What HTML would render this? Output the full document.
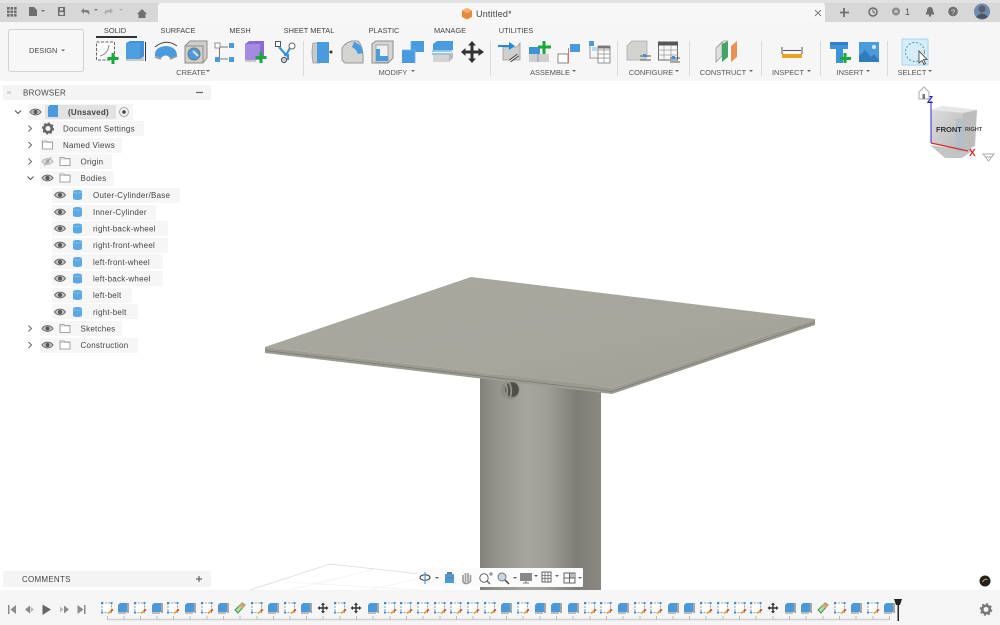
<!DOCTYPE html>
<html>
<head>
<meta charset="utf-8">
<style>
html,body{margin:0;padding:0;width:1000px;height:625px;overflow:hidden;background:#fff;font-family:"Liberation Sans",sans-serif;}
svg{position:absolute;left:0;top:0;}
text{font-family:"Liberation Sans",sans-serif;fill:#4a4a4a;}
.tb{font-size:7.4px;fill:#444;text-anchor:middle;}
.lb{font-size:7.4px;fill:#555;text-anchor:middle;}
.tr{font-size:8px;fill:#444;letter-spacing:.25px;}
</style>
</head>
<body>
<svg width="1000" height="625" viewBox="0 0 1000 625" xmlns="http://www.w3.org/2000/svg">
<defs>
<linearGradient id="cyl" x1="0" x2="1" y1="0" y2="0">
<stop offset="0" stop-color="#82817a"/><stop offset=".12" stop-color="#93928a"/><stop offset=".38" stop-color="#a6a59d"/><stop offset=".55" stop-color="#a09f97"/><stop offset=".8" stop-color="#7f7e76"/><stop offset="1" stop-color="#8a8981"/>
</linearGradient>
<linearGradient id="plate" x1="0" x2="1" y1="0" y2="1">
<stop offset="0" stop-color="#a8a89f"/><stop offset=".6" stop-color="#a6a69d"/><stop offset="1" stop-color="#9f9f96"/>
</linearGradient>
<linearGradient id="cube" x1="0" x2="1" y1="0" y2="1">
<stop offset="0" stop-color="#dcdcdc"/><stop offset="1" stop-color="#b8b8b8"/>
</linearGradient>
<g id="sk"><rect x="-5" y="-5" width="9.5" height="9.5" fill="#fff" stroke="#7c8a98" stroke-width=".8" stroke-dasharray="2 1"/><rect x="-6" y="-6" width="2" height="2" fill="#3d8dd2"/><rect x="3.5" y="-6" width="2" height="2" fill="#3d8dd2"/><rect x="-6" y="3.5" width="2" height="2" fill="#3d8dd2"/><path d="M1 5.5L5 2" stroke="#f0a030" stroke-width="1.8"/><path d="M4 3L6 1.5" stroke="#d04040" stroke-width="1.6"/></g>
<g id="bd"><path d="M-5-3L-3-5H4V4H-5Z" fill="#4c9ad9"/><path d="M-5-3H2V4H-5Z" fill="#4a98da"/><path d="M-5 4H3V6H-5Z" fill="#bdbdb8"/><path d="M5-5V5" stroke="#444" stroke-width=".9"/></g>
<g id="mv" fill="#333"><path d="M0-5.5L2-3H.7V-.7H3V-2L5.5 0 3 2V.7H.7V3H2L0 5.5-2 3H-.7V.7H-3V2L-5.5 0-3-2V-.7H-.7V-3H-2Z"/></g>
<g id="fl"><path d="M-5 2L2-5 5-3-2 5Z" fill="#b9d7b0" stroke="#3f9a4a" stroke-width="1"/><path d="M1-5L5-3 3 0 -1-2Z" fill="#e0a070"/></g>
<g id="eye"><path d="M-5.5 0C-3-3.8 3-3.8 5.5 0 3 3.800-3 3.800-5.500 0Z" fill="#c4c4c4" stroke="#666" stroke-width="1"/><circle r="2" fill="#555"/></g>
<g id="fld"><path d="M-5-4H-1L0-3H5V4H-5Z" fill="#fff" stroke="#888" stroke-width=".8"/><path d="M-5-2.5H5" stroke="#aaa" stroke-width=".6"/></g>
<g id="cy"><path d="M-4.500-3.500C-4.500-5.500 4.500-5.500 4.500-3.500V3.500C4.500 5.500-4.500 5.500-4.500 3.500Z" fill="#5aa9e6"/><path d="M-4.500-3C-3-1.500 3-1.500 4.500-3" stroke="#8cc7f0" fill="none" stroke-width=".7"/></g>
<path id="car" d="M0 0H4L2 2Z" fill="#666"/>
<path id="gt" d="M-2-3L1 0-2 3" fill="none" stroke="#666" stroke-width="1"/>
<path id="gd" d="M-3-1.500L0 1.500 3-1.500" fill="none" stroke="#555" stroke-width="1"/>
</defs>

<!-- top bar -->
<rect width="1000" height="3" fill="#e2e2e2"/>
<rect y="3" width="1000" height="19" fill="#d7d7d7"/>
<path d="M158 22V6Q158 3 161 3H822Q825 3 825 6V22Z" fill="#f7f7f7"/>
<rect y="22" width="1000" height="59" fill="#f6f6f6"/>
<!-- top bar icons left -->
<g fill="#6f6f6f">
<rect x="7" y="7" width="2.600" height="2.600"/><rect x="10.500" y="7" width="2.600" height="2.600"/><rect x="14" y="7" width="2.600" height="2.600"/>
<rect x="7" y="10.500" width="2.600" height="2.600"/><rect x="10.500" y="10.500" width="2.600" height="2.600"/><rect x="14" y="10.500" width="2.600" height="2.600"/>
<rect x="7" y="14" width="2.600" height="2.600"/><rect x="10.500" y="14" width="2.600" height="2.600"/><rect x="14" y="14" width="2.600" height="2.600"/>
<path d="M29 7H34L37 10V16H29Z"/>
<path d="M41 10H45L43 12Z"/>
<path d="M58 7H65V16H58Z"/>
</g>
<rect x="60" y="8" width="3" height="2.500" fill="#d7d7d7"/><rect x="59.500" y="12" width="4" height="3" fill="#d7d7d7"/>
<path d="M81 11L84 8V10H88Q90 11 89 15Q88 12 84 12V14Z" fill="#7d7d7d"/><path d="M94 9H98L96 11Z" fill="#7d7d7d"/>
<path d="M113 11L110 8V10H106Q104 11 105 15Q106 12 110 12V14Z" fill="#aeaeae"/><path d="M119 9H123L121 11Z" fill="#aeaeae"/>
<path d="M137 14L142 9 147 14H145.500V18H138.500V14Z" fill="#707070"/>
<!-- title -->
<path d="M467 8L472 10.500V17L467 19.500 462 17V10.500Z" fill="#e8893a"/><path d="M462 10.500L467 8 472 10.500 467 13Z" fill="#f4b070"/>
<text x="476" y="17" font-size="9" letter-spacing=".2" style="fill:#444">Untitled*</text>
<path d="M815 10L821 16M821 10L815 16" stroke="#777" stroke-width=".9"/>
<!-- right top icons -->
<path d="M844 8V17M840 12.500H849" stroke="#6f6f6f" stroke-width="1.800"/>
<circle cx="873" cy="12" r="4" fill="#d7d7d7" stroke="#6a6a6a" stroke-width="1.500"/><path d="M873 9.500V12L875 13" stroke="#666" fill="none"/>
<circle cx="896" cy="11.500" r="4" fill="#8a8a8a"/><circle cx="896" cy="11.500" r="1.800" fill="#c0c0c0"/>
<text x="905" y="15" font-size="9" style="fill:#555">1</text>
<path d="M930 7Q933 7 933 11L934.500 14.500H925.500L927 11Q927 7 930 7Z" fill="#6f6f6f"/><circle cx="930" cy="15.500" r="1.200" fill="#6f6f6f"/>
<circle cx="953" cy="11.500" r="4.800" fill="#707070"/><text x="951" y="14.500" font-size="7.500" style="fill:#e8e8e8">?</text>
<circle cx="982" cy="11.500" r="8" fill="#6e8cb0"/><circle cx="982" cy="9" r="3.500" fill="#5a5f6a"/><path d="M976 17Q982 10 988 17Q982 21 976 17Z" fill="#4c5566"/>

<!-- Design button -->
<rect x="8.500" y="29.500" width="75" height="42" rx="2" fill="#f7f7f7" stroke="#d2d2d2"/>
<text x="29" y="53" font-size="7.400" style="fill:#444">DESIGN</text><use href="#car" x="61" y="49.500"/>

<!-- tabs -->
<text class="tb" x="115" y="33">SOLID</text>
<rect x="96" y="36" width="41" height="2" fill="#333"/>
<text class="tb" x="178" y="33">SURFACE</text>
<text class="tb" x="240" y="33">MESH</text>
<text class="tb" x="309" y="33">SHEET METAL</text>
<text class="tb" x="384" y="33">PLASTIC</text>
<text class="tb" x="450" y="33">MANAGE</text>
<text class="tb" x="516" y="33">UTILITIES</text>

<!-- separators -->
<g stroke="#dcdcdc"><path d="M303.500 41V76M490.500 41V76M617.500 41V76M689.500 41V76M761.500 41V76M820.500 41V76M887.500 41V76"/></g>

<!-- CREATE icons -->
<rect x="96.500" y="42" width="18" height="18" fill="#fbfbfb" stroke="#666" stroke-dasharray="3 1.500"/><path d="M100 56Q108 54 109 45" stroke="#888" fill="none"/><path d="M113 53V64M107.500 58.500H118.500" stroke="#18a83c" stroke-width="3"/>
<path d="M126 43L130 41H144V59H126Z" fill="#3f92d8"/><path d="M126 43H140V59H126Z" fill="#4e9fe0"/><path d="M126 59H140L144 56V61H126Z" fill="#c8c8c4"/><path d="M145.500 42V61" stroke="#333"/>
<path d="M155 56Q154 47 166 46Q177 47 177 56L170 58Q166 53 161 58Z" fill="#4a9bdd"/><path d="M155 47Q166 38 177 46" fill="none" stroke="#444"/><path d="M155 57L161 59 M170 59L177 56" stroke="#999" stroke-width="1.500"/>
<path d="M185 46L190 41H207V58L203 63H185Z" fill="#cfcfcb" stroke="#8c8c8c"/><path d="M185 46H203V63" fill="none" stroke="#8c8c8c"/><circle cx="194" cy="54" r="6" fill="#4a9bdd" stroke="#777"/><path d="M193 51L198 56" stroke="#ddd" stroke-width="2"/>
<path d="M220 47H228M220 59H228M219.500 48V58" stroke="#7b7b7b"/><rect x="215" y="43" width="5" height="5" fill="#fff" stroke="#777" stroke-width=".8"/><rect x="229" y="43" width="5" height="5" fill="#4a9bdd"/><rect x="215" y="57" width="5" height="5" fill="#4a9bdd"/><rect x="229" y="57" width="5" height="5" fill="#4a9bdd"/>
<path d="M245 44L249 41H264V58H245Z" fill="#8a6bd6"/><path d="M245 44H260V60H245Z" fill="#a48be0"/><path d="M245 60H256V62H245Z" fill="#c8c8c4"/><path d="M261 52V63M255.500 57.500H266.500" stroke="#18a83c" stroke-width="3"/>
<rect x="275.500" y="41.500" width="5" height="5" fill="#fff" stroke="#555"/><circle cx="292" cy="46" r="3" fill="#fff" stroke="#666"/><path d="M279 47L286 55 290 48M284 55H288V60" stroke="#3f92d8" stroke-width="2.200" fill="none"/><circle cx="284" cy="60" r="2.600" fill="#ccc" stroke="#555"/>
<text class="lb" x="191" y="75">CREATE</text><use href="#car" x="206" y="70"/>

<!-- MODIFY -->
<path d="M313 43H320V63H313Q311 53 313 43Z" fill="#c9c9c5" stroke="#999" stroke-width=".8"/><path d="M317 42H329V63H317Z" fill="#4a9bdd"/><circle cx="331" cy="52" r="1.500" fill="#333"/>
<path d="M342 48Q346 42 352 41H358Q364 47 363 63H345L342 60Z" fill="#d4d4d0" stroke="#999"/><path d="M354 42Q362 44 363 53L358 54Q356 49 352 47Z" fill="#4a9bdd"/>
<path d="M372 44L376 41H393V58L388 63H372Z" fill="#d4d4d0" stroke="#8f8f8f"/><path d="M376 45H388V62H376Z" fill="#f0f0ee" stroke="#8f8f8f" stroke-width=".7"/><path d="M376 49H380V56H388V61H376Z" fill="#4a9bdd"/>
<path d="M402 50H411V41H424V52H415V63H402Z" fill="#4a9bdd"/><path d="M411 41V50M402 50H415V63" stroke="#6db2ea" fill="none" stroke-width=".8"/>
<path d="M433 44L437 41H453V50H433Z" fill="#4a9bdd"/><path d="M432 51L452 51M432 54L452 54" stroke="#3f92d8"/><path d="M433 55H449V62H433Z" fill="#d4d4d0"/><path d="M449 55L453 52V58L449 62Z" fill="#bbb"/>
<path d="M472 41L476 45.500H473.500V50.500H478.500V48L484 52 478.500 56V53.500H473.500V58.500H476L472 63 468 58.500H470.500V53.500H465.500V56L461 52 465.500 48V50.500H470.500V45.500H468Z" fill="#333"/>
<text class="lb" x="393" y="75">MODIFY</text><use href="#car" x="411" y="70"/>

<!-- ASSEMBLE -->
<path d="M503 47H517L520 43V60H503Z" fill="#cfcfcb" stroke="#999" stroke-width=".8"/><path d="M498 45H509V42L515 46 509 50V47H498Z" fill="#1f8be0"/><path d="M510 61L518 55" stroke="#333" stroke-width="3"/><path d="M510 61L518 55" stroke="#eee" stroke-width="1.200"/>
<path d="M529 47H540V54H529Z" fill="#3f92d8"/><path d="M529 54H549V62H529Z" fill="#cfcfcb"/><path d="M538 54V62" stroke="#999"/><path d="M544 41V54M538 47H551" stroke="#18a83c" stroke-width="3"/>
<path d="M558 54V63H568V54Z" fill="#fff" stroke="#888"/><path d="M568.500 48V63" stroke="#e07070"/><rect x="570" y="44" width="10" height="8" fill="#4a9bdd"/>
<rect x="589" y="41" width="5" height="5" fill="#4a9bdd"/><rect x="592" y="47" width="5" height="4" fill="#bcd8ef"/><path d="M590 46V58H598" stroke="#999" fill="none"/><rect x="598" y="46" width="12" height="17" fill="#fff" stroke="#777" stroke-width=".8"/><path d="M598 50H610M598 54H610M598 58H610M604 46V63" stroke="#888" stroke-width=".7"/><rect x="598" y="46" width="12" height="2.500" fill="#777"/>
<text class="lb" x="550" y="75">ASSEMBLE</text><use href="#car" x="572" y="70"/>

<!-- CONFIGURE -->
<path d="M627 46L632 41H647V57L644 60H627Z" fill="#d2d2ce" stroke="#aaa" stroke-width=".8"/><path d="M640 56H651M640 60H651" stroke="#555"/><rect x="643" y="54" width="3" height="3" fill="#3f92d8"/>
<rect x="658.500" y="42" width="19" height="18" fill="#f7f7f7" stroke="#666"/><rect x="658" y="41.500" width="20" height="4" fill="#555"/><path d="M658 50H678M658 55H678M664 45V60M671 45V60" stroke="#999" stroke-width=".7"/><path d="M670 58H680M670 62H680" stroke="#555"/><rect x="672" y="56" width="3" height="3" fill="#3f92d8"/>
<text class="lb" x="651" y="75">CONFIGURE</text><use href="#car" x="675" y="70"/>

<!-- CONSTRUCT -->
<path d="M716 48L722 42 V56L716 62Z" fill="#e0e0dc" stroke="#999" stroke-width=".8"/><path d="M722 44L728 41V57L722 62Z" fill="#3fa66a"/><path d="M716 48L724 41H728" fill="none" stroke="#aaa"/><path d="M731 46L737 41V57L731 62Z" fill="#e8925a"/>
<text class="lb" x="723" y="75">CONSTRUCT</text><use href="#car" x="749" y="70"/>

<!-- INSPECT -->
<path d="M782 47V54M802 47V54M783 50.500H801" stroke="#555"/><rect x="782" y="54" width="20" height="4" fill="#e6a320"/>
<text class="lb" x="788" y="75">INSPECT</text><use href="#car" x="807" y="70"/>

<!-- INSERT -->
<path d="M830 42H848V49H843V63H836V49H830Z" fill="#3f92d8"/><path d="M830 42H848V45H830Z" fill="#2f80c8"/><path d="M845 53V63M840 58.500H851" stroke="#18a83c" stroke-width="3"/>
<rect x="859" y="42" width="20" height="20" fill="#4a9bdd"/><path d="M859 62V56L865 50 871 57 874 54 879 60V62Z" fill="#2f7dbf"/><circle cx="874" cy="47" r="2" fill="#d8ecfa"/>
<text class="lb" x="850" y="75">INSERT</text><use href="#car" x="866" y="70"/>

<!-- SELECT -->
<rect x="902" y="39" width="26" height="26" rx="1" fill="#d7ecf8" stroke="#a8d4ee"/>
<circle cx="915" cy="52" r="9.500" fill="none" stroke="#3fa88a" stroke-dasharray="2 1.800"/>
<path d="M919 51V63L922 60.500 924 64.500 925.500 63.500 923.500 59.500H927Z" fill="#fff" stroke="#333" stroke-width=".8"/>
<text class="lb" x="912" y="75">SELECT</text><use href="#car" x="928" y="70"/>

<!-- BROWSER -->
<rect x="3" y="85" width="208" height="15" fill="#f4f4f4"/>
<path d="M8 91V94M10 91V94" stroke="#aaa" stroke-width=".8"/>
<text class="tr" x="23" y="95.500">BROWSER</text>
<path d="M196 92.500H203" stroke="#666" stroke-width="1.200"/>

<!-- tree -->
<rect x="28" y="104" width="105" height="16" rx="1" fill="#f5f5f5"/>
<rect x="45" y="105" width="71" height="14" fill="#e2e2e2"/>
<use href="#gd" x="18" y="112"/><use href="#eye" x="35.500" y="112"/>
<path d="M48 107L50 105H58V117H48Z" fill="#4a9bdd"/>
<text class="tr" x="68" y="115" style="font-weight:bold">(Unsaved)</text>
<circle cx="124" cy="112" r="4.500" fill="#eee" stroke="#999" stroke-width=".8"/><circle cx="124" cy="112" r="1.800" fill="#444"/>

<rect x="40" y="121" width="104" height="15" fill="#f6f6f6"/>
<use href="#gt" x="30.500" y="128.500"/>
<circle cx="48" cy="128.500" r="3.800" fill="none" stroke="#666" stroke-width="2.600"/><circle cx="48" cy="128.500" r="5.300" fill="none" stroke="#666" stroke-width="1.500" stroke-dasharray="2 2.100"/>
<text class="tr" x="63" y="131.500">Document Settings</text>

<rect x="40" y="138" width="82" height="15" fill="#f6f6f6"/>
<use href="#gt" x="30.500" y="145"/><use href="#fld" x="47.500" y="145"/>
<text class="tr" x="63" y="148">Named Views</text>

<rect x="40" y="154" width="72" height="15" fill="#f6f6f6"/>
<use href="#gt" x="30.500" y="161.500"/><use href="#eye" x="47.500" y="161.500" opacity=".45"/><path d="M44 166L51 157" stroke="#999" stroke-width=".8"/><use href="#fld" x="65" y="161.500"/>
<text class="tr" x="80.500" y="164.500">Origin</text>

<rect x="40" y="171" width="74" height="15" fill="#f6f6f6"/>
<use href="#gd" x="30.500" y="178"/><use href="#eye" x="47.500" y="178"/><use href="#fld" x="65" y="178"/>
<text class="tr" x="80.500" y="181">Bodies</text>

<rect x="52" y="188" width="128" height="15" fill="#f6f6f6"/>
<rect x="52" y="205" width="104" height="15" fill="#f6f6f6"/>
<rect x="52" y="221" width="116" height="15" fill="#f6f6f6"/>
<rect x="52" y="238" width="116" height="15" fill="#f6f6f6"/>
<rect x="52" y="254" width="111" height="15" fill="#f6f6f6"/>
<rect x="52" y="271" width="111" height="15" fill="#f6f6f6"/>
<rect x="52" y="288" width="80" height="15" fill="#f6f6f6"/>
<rect x="52" y="304" width="86" height="15" fill="#f6f6f6"/>
<use href="#eye" x="60" y="195"/><use href="#cy" x="77.500" y="195"/><text class="tr" x="93" y="198">Outer-Cylinder/Base</text>
<use href="#eye" x="60" y="212"/><use href="#cy" x="77.500" y="212"/><text class="tr" x="93" y="215">Inner-Cylinder</text>
<use href="#eye" x="60" y="228.500"/><use href="#cy" x="77.500" y="228.500"/><text class="tr" x="93" y="231.500">right-back-wheel</text>
<use href="#eye" x="60" y="245"/><use href="#cy" x="77.500" y="245"/><text class="tr" x="93" y="248">right-front-wheel</text>
<use href="#eye" x="60" y="262"/><use href="#cy" x="77.500" y="262"/><text class="tr" x="93" y="265">left-front-wheel</text>
<use href="#eye" x="60" y="278.500"/><use href="#cy" x="77.500" y="278.500"/><text class="tr" x="93" y="281.500">left-back-wheel</text>
<use href="#eye" x="60" y="295"/><use href="#cy" x="77.500" y="295"/><text class="tr" x="93" y="298">left-belt</text>
<use href="#eye" x="60" y="312"/><use href="#cy" x="77.500" y="312"/><text class="tr" x="93" y="315">right-belt</text>

<rect x="40" y="321" width="82" height="15" fill="#f6f6f6"/>
<use href="#gt" x="30.500" y="328.500"/><use href="#eye" x="47.500" y="328.500"/><use href="#fld" x="65" y="328.500"/>
<text class="tr" x="80.500" y="331.500">Sketches</text>
<rect x="40" y="338" width="98" height="15" fill="#f6f6f6"/>
<use href="#gt" x="30.500" y="345"/><use href="#eye" x="47.500" y="345"/><use href="#fld" x="65" y="345"/>
<text class="tr" x="80.500" y="348">Construction</text>

<!-- grid on ground -->
<path d="M250 590L330 564 420 574" fill="none" stroke="#e2e2e2"/>
<path d="M285 582L420 590M375 569L290 590M420 578L370 590" fill="none" stroke="#f4f4f4"/>

<!-- cylinder -->
<rect x="480" y="375" width="121" height="215" fill="url(#cyl)"/>
<!-- hole -->
<circle cx="510" cy="390" r="9.500" fill="#8c8b83"/>
<ellipse cx="512" cy="389.500" rx="6.800" ry="7.500" fill="#4f4e49"/>
<path d="M505 382Q509 390 506 398M509 382Q513 390 510 398" stroke="#96958d" stroke-width="1.700" fill="none"/>
<!-- plate -->
<path d="M265 347L612 388 815 319V325L612 394 265 353Z" fill="#9b9b92"/>
<path d="M265 350.500L612 391.500 815 322.500" fill="none" stroke="#7b7b74" stroke-width=".8"/>
<path d="M265 347L471 277 815 319 612 388Z" fill="url(#plate)"/>

<!-- viewcube -->
<path d="M930 145L972 151 962 158H945Z" fill="#c4c4c4"/>
<path d="M931 110L943 106 977 110 971 151 931 143Z" fill="url(#cube)"/>
<path d="M931 110L943 106 977 110 963 113Z" fill="#e6e6e6"/>
<path d="M931 110L963 113 961 151 931 143Z" fill="url(#cube)"/>
<path d="M963 113L977 110 975 146 961 151Z" fill="#bdbdbd"/>
<rect x="956" y="119" width="8" height="33" fill="#b0bfce" opacity=".85"/>
<text x="936" y="132" font-size="7.500" style="fill:#2f2f2f;font-weight:bold">FRONT</text>
<text x="965" y="131" font-size="5.500" style="fill:#444;font-weight:bold">RIGHT</text>
<path d="M931 101V143" stroke="#2a2ad8" stroke-width="1"/>
<path d="M931 143L968 151" stroke="#d82a2a" stroke-width="1.200"/>
<text x="927" y="103" font-size="10" font-weight="bold" style="fill:#1e1ec8">Z</text>
<text x="969" y="156" font-size="10" font-weight="bold" style="fill:#d82a2a">X</text>
<path d="M919 92L924 87 929 92V99H919Z" fill="#fff" stroke="#aaa"/><rect x="922.500" y="94" width="2.500" height="5" fill="#777"/>
<path d="M983 154H994L988.500 161Z" fill="#fff" stroke="#aaa"/><path d="M985 157H992" stroke="#aaa"/>

<!-- comments -->
<rect x="3" y="571" width="208" height="16" fill="#f4f4f4"/>
<text class="tr" x="22" y="582">COMMENTS</text>
<path d="M199 576V582M196 579H202" stroke="#666" stroke-width="1.200"/>

<!-- nav bar -->
<rect x="418" y="568" width="165" height="19" rx="1" fill="#fbfbfb"/>
<ellipse cx="425" cy="577.500" rx="5" ry="2.800" fill="none" stroke="#333"/><path d="M425 572V584" stroke="#4a9bdd" stroke-width="1.200"/><path d="M435 577H439L437 579Z" fill="#666"/>
<path d="M445 574H454V583H445Z" fill="#4a9bdd"/><path d="M447 572H452V574H447Z" fill="#777"/><path d="M445 578H454" stroke="#777"/>
<path d="M463 582V575M465.500 582V573M468 582V573M470.500 582V575M463 582Q466 585 470 582" stroke="#999" stroke-width="1.600" fill="none"/>
<circle cx="484" cy="578" r="4.200" fill="none" stroke="#666"/><path d="M487 581L490 584" stroke="#666" stroke-width="1.400"/><path d="M491 572V576M489 574H493" stroke="#777"/>
<circle cx="502" cy="577" r="4" fill="#c5d5e2" stroke="#777"/><path d="M505 580L509 584" stroke="#444" stroke-width="1.500"/><path d="M513 577H517L515 579Z" fill="#666"/>
<rect x="520" y="573" width="12" height="8" fill="#888"/><path d="M523 583H529M526 581V583" stroke="#777"/><path d="M534 575H538L536 577Z" fill="#666"/>
<rect x="542" y="572" width="9" height="10" fill="none" stroke="#666"/><path d="M542 575.500H551M542 578.500H551M545 572V582M548 572V582" stroke="#666" stroke-width=".8"/><path d="M555 575H559L557 577Z" fill="#666"/>
<rect x="564" y="573" width="11" height="10" fill="none" stroke="#666"/><path d="M564 578H575M569.500 573V583" stroke="#666"/><rect x="570" y="573.500" width="5" height="4" fill="#bbb"/><path d="M578 577H582L580 579Z" fill="#666"/>

<!-- small circle bottom right -->
<circle cx="985" cy="581" r="5.500" fill="#222"/><path d="M982.500 582Q985 578 987.500 579.500" stroke="#f0a050" fill="none"/>

<!-- timeline -->
<rect y="590" width="1000" height="35" fill="#f5f5f5"/>
<g fill="#8a8a8a">
<rect x="8" y="605" width="1.500" height="9"/><path d="M16 605V614L10.500 609.500Z"/>
<path d="M25 609.500L30 605.500V613.500Z"/><path d="M30.500 606.500L34 609.500 30.500 612.500Z" fill="#bbb"/>
<path d="M42.500 604.500L51 609.500 42.500 615Z" fill="#666"/>
<path d="M60 606.500L63.500 609.500 60 612.500Z" fill="#bbb"/><path d="M64 605.500L69 609.500 64 613.500Z"/>
<path d="M77.500 605V614L83.500 609.500Z"/><rect x="84" y="605" width="1.500" height="9"/>
</g>
<path d="M108 619.500H890" stroke="#d2d2d2" stroke-width="1.400"/>
<g stroke="#bdbdbd"><path d="M107.500 616V620M124 616V620M140.500 616V620M157 616V620M173.500 616V620M190 616V620M207 616V620M223.500 616V620M240 616V620M257 616V620M273.500 616V620M290 616V620M306.500 616V620M323 616V620M340 616V620M356.500 616V620M373 616V620M390 616V620M406.500 616V620M423 616V620M440 616V620M456.500 616V620M473 616V620M490 616V620M506.500 616V620M523 616V620M540 616V620M556.500 616V620M573 616V620M590 616V620M606.500 616V620M623 616V620M640 616V620M656.500 616V620M673 616V620M689.500 616V620M706 616V620M723 616V620M739.500 616V620M756 616V620M773 616V620M789.500 616V620M806 616V620M823 616V620M839.500 616V620M856 616V620M873 616V620M889.500 616V620"/></g>
<use href="#sk" x="107" y="608"/><use href="#bd" x="123" y="608"/><use href="#sk" x="140" y="608"/><use href="#bd" x="157" y="608"/><use href="#sk" x="173" y="608"/><use href="#bd" x="190" y="608"/><use href="#sk" x="207" y="608"/><use href="#bd" x="223" y="608"/><use href="#fl" x="240" y="608"/><use href="#sk" x="257" y="608"/><use href="#bd" x="273" y="608"/><use href="#sk" x="290" y="608"/><use href="#bd" x="306" y="608"/><use href="#mv" x="323" y="608"/><use href="#sk" x="340" y="608"/><use href="#mv" x="356" y="608"/><use href="#bd" x="373" y="608"/><use href="#sk" x="390" y="608"/><use href="#sk" x="406" y="608"/><use href="#sk" x="423" y="608"/><use href="#sk" x="440" y="608"/><use href="#sk" x="456" y="608"/><use href="#sk" x="473" y="608"/><use href="#sk" x="490" y="608"/><use href="#bd" x="506" y="608"/><use href="#sk" x="523" y="608"/><use href="#bd" x="540" y="608"/><use href="#bd" x="556" y="608"/><use href="#bd" x="573" y="608"/><use href="#sk" x="590" y="608"/><use href="#sk" x="606" y="608"/><use href="#bd" x="623" y="608"/><use href="#sk" x="640" y="608"/><use href="#sk" x="656" y="608"/><use href="#bd" x="673" y="608"/><use href="#bd" x="689" y="608"/><use href="#sk" x="706" y="608"/><use href="#sk" x="723" y="608"/><use href="#sk" x="740" y="608"/><use href="#sk" x="756" y="608"/><use href="#mv" x="773" y="608"/><use href="#bd" x="790" y="608"/><use href="#bd" x="806" y="608"/><use href="#fl" x="823" y="608"/><use href="#sk" x="840" y="608"/><use href="#bd" x="856" y="608"/><use href="#sk" x="873" y="608"/><use href="#bd" x="889" y="608"/>
<path d="M894 599H902L900 605H899V621H897.500V605H896Z" fill="#222"/>
<!-- gear -->
<circle cx="986" cy="609.500" r="3.800" fill="none" stroke="#777" stroke-width="2.600"/><circle cx="986" cy="609.500" r="5.500" fill="none" stroke="#777" stroke-width="1.600" stroke-dasharray="2.200 2.100"/>
</svg>
</body>
</html>
